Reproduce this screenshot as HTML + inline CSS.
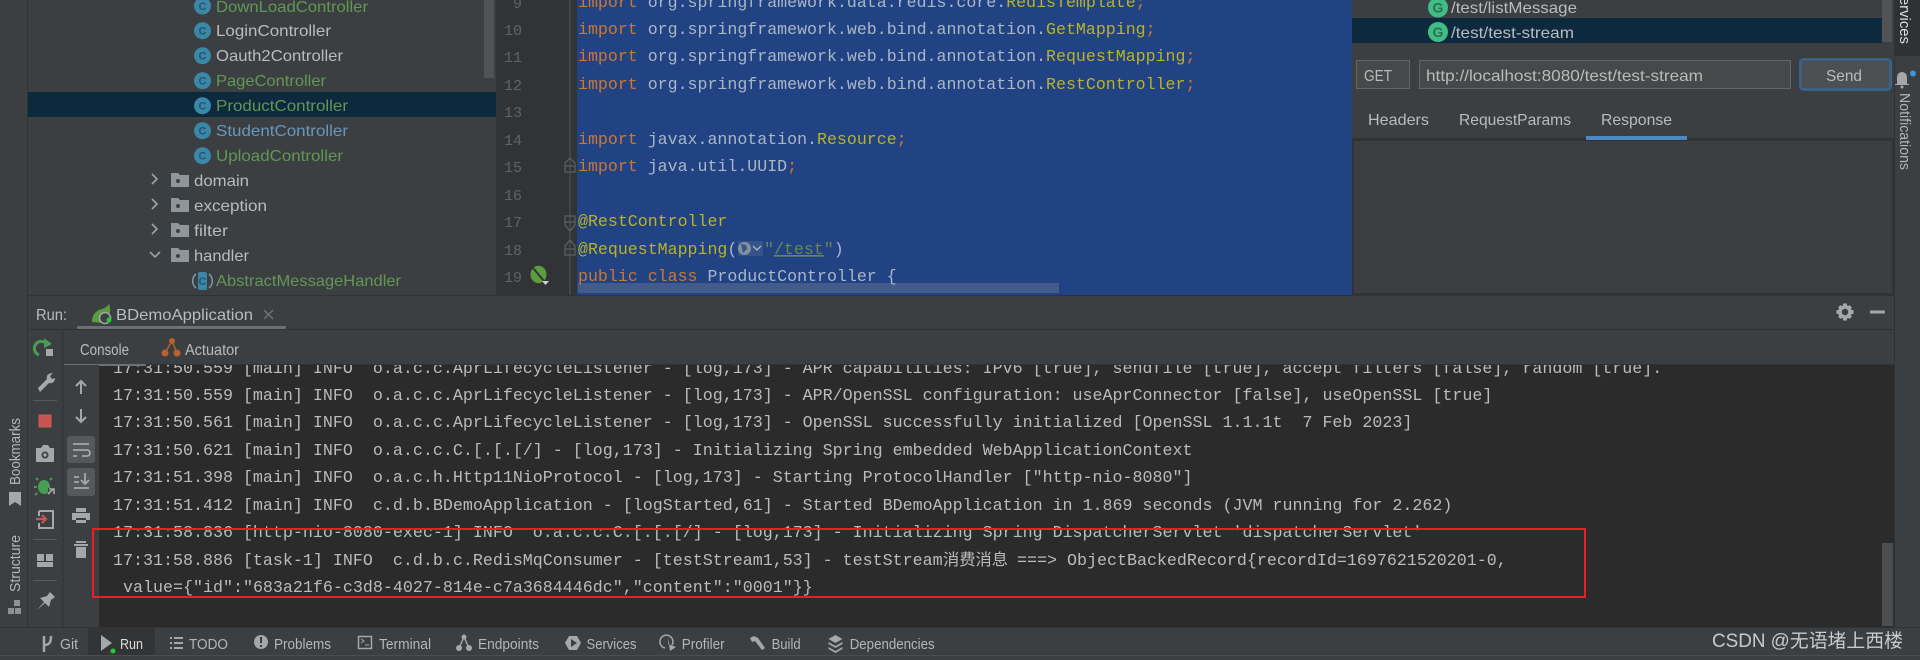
<!DOCTYPE html>
<html lang="en"><head><meta charset="utf-8"><title>IDE Run Console</title>
<style>
html,body{margin:0;padding:0;background:#3c3f41;width:1920px;height:660px;overflow:hidden}
svg{display:block}
text{white-space:pre}
.u{font-family:"Liberation Sans","Noto Sans CJK SC",sans-serif;font-size:16px;fill:#bbbbbb}
.s{font-family:"Liberation Sans","Noto Sans CJK SC",sans-serif;font-size:14.5px;fill:#b4b6b8}
.m{font-family:"Liberation Mono","Noto Sans CJK SC",monospace;font-size:16.6px;fill:#a9b7c6}
.c{font-family:"Liberation Mono","Noto Sans CJK SC",monospace;font-size:16.67px;fill:#bbbbbb}
.n{font-family:"Liberation Mono",monospace;font-size:15px;fill:#606366;text-anchor:end}
.k{fill:#cc7832}.y{fill:#b8b32a}.g{fill:#629755}.b{fill:#6897bb}.str{fill:#6a8759}
.l{font-family:"Liberation Sans",sans-serif;font-size:11px;font-weight:bold;fill:#25566e;text-anchor:middle}
.i{fill:#a5a8aa}.st{fill:none;stroke:#a5a8aa;stroke-width:2}
</style></head><body>
<svg xmlns="http://www.w3.org/2000/svg" width="1920" height="660" viewBox="0 0 1920 660">
<rect width="1920" height="660" fill="#3c3f41"/>

<!-- project tree -->
<rect x="27" y="0" width="1" height="296" fill="#323232"/>
<rect x="28" y="92" width="468" height="25" fill="#0d293e"/>
<rect x="484" y="0" width="10" height="78" fill="#505254"/>
<g>
<circle cx="202.500" cy="6" r="8.500" fill="#3a87a8"/><text class="l" x="202.500" y="10">C</text>
<circle cx="202.500" cy="30.700" r="8.500" fill="#3a87a8"/><text class="l" x="202.500" y="34.700">C</text>
<circle cx="202.500" cy="55.700" r="8.500" fill="#3a87a8"/><text class="l" x="202.500" y="59.700">C</text>
<circle cx="202.500" cy="80.700" r="8.500" fill="#3a87a8"/><text class="l" x="202.500" y="84.700">C</text>
<circle cx="202.500" cy="105.700" r="8.500" fill="#3a87a8"/><text class="l" x="202.500" y="109.700">C</text>
<circle cx="202.500" cy="130.700" r="8.500" fill="#3a87a8"/><text class="l" x="202.500" y="134.700">C</text>
<circle cx="202.500" cy="155.700" r="8.500" fill="#3a87a8"/><text class="l" x="202.500" y="159.700">C</text>
<path d="M196 274a9 9 0 0 0 0 14M209 274a9 9 0 0 1 0 14" fill="none" stroke="#7f9aa8" stroke-width="1.500"/>
<rect x="198" y="272" width="9" height="18" rx="2" fill="#3a87a8"/><text class="l" x="202.500" y="285">C</text>
</g>
<text class="u g" x="216" y="12" textLength="152" lengthAdjust="spacingAndGlyphs">DownLoadController</text>
<text class="u" x="216" y="36" textLength="115" lengthAdjust="spacingAndGlyphs">LoginController</text>
<text class="u" x="216" y="61" textLength="127" lengthAdjust="spacingAndGlyphs">Oauth2Controller</text>
<text class="u g" x="216" y="86" textLength="110" lengthAdjust="spacingAndGlyphs">PageController</text>
<text class="u g" x="216" y="111" textLength="132" lengthAdjust="spacingAndGlyphs">ProductController</text>
<text class="u b" x="216" y="136" textLength="132" lengthAdjust="spacingAndGlyphs">StudentController</text>
<text class="u g" x="216" y="161" textLength="127" lengthAdjust="spacingAndGlyphs">UploadController</text>
<text class="u" x="194" y="186" textLength="55" lengthAdjust="spacingAndGlyphs">domain</text>
<text class="u" x="194" y="211" textLength="73" lengthAdjust="spacingAndGlyphs">exception</text>
<text class="u" x="194" y="236" textLength="34" lengthAdjust="spacingAndGlyphs">filter</text>
<text class="u" x="194" y="261" textLength="55" lengthAdjust="spacingAndGlyphs">handler</text>
<text class="u g" x="216" y="286" textLength="185" lengthAdjust="spacingAndGlyphs">AbstractMessageHandler</text>
<g fill="#90979c">
<path d="M171 173h7l2 2h9v12h-18z"/><path d="M171 198h7l2 2h9v12h-18z"/><path d="M171 223h7l2 2h9v12h-18z"/><path d="M171 248h7l2 2h9v12h-18z"/>
</g>
<g fill="#3c3f41"><circle cx="178" cy="181" r="2"/><circle cx="178" cy="206" r="2"/><circle cx="178" cy="231" r="2"/><circle cx="178" cy="256" r="2"/></g>
<g fill="none" stroke="#a0a3a5" stroke-width="1.600">
<path d="M152 174l5 5-5 5M152 199l5 5-5 5M152 224l5 5-5 5M150 252l5 5 5-5"/>
</g>

<!-- gutter -->
<rect x="496" y="0" width="81" height="295" fill="#313335"/>
<rect x="569.500" y="0" width="1" height="295" fill="#555555"/>
<text class="n" x="522" y="8">9</text>
<text class="n" x="522" y="35">10</text>
<text class="n" x="522" y="62">11</text>
<text class="n" x="522" y="90">12</text>
<text class="n" x="522" y="117">13</text>
<text class="n" x="522" y="145">14</text>
<text class="n" x="522" y="172">15</text>
<text class="n" x="522" y="200">16</text>
<text class="n" x="522" y="227">17</text>
<text class="n" x="522" y="255">18</text>
<text class="n" x="522" y="282">19</text>
<g fill="none" stroke="#5c5e60" stroke-width="1.300">
<path d="M565 172v-9l5-5 5 5v9zM565 166h10"/>
<path d="M565 216v9l5 6 5-6v-9zM565 222h10"/>
<path d="M565 255v-9l5-6 5 6v9zM565 249h10"/>
</g>
<ellipse cx="538.500" cy="274.500" rx="8" ry="8.700" fill="#5a9c3f"/>
<path d="M533 268l11 13" stroke="#2f3133" stroke-width="1.800"/>
<path d="M542 281h7l-3.500 4z" fill="#cfd1d3"/>

<!-- code -->
<rect x="577" y="0" width="775" height="295" fill="#214283"/>
<rect x="578" y="283" width="481" height="10" fill="#425b8b"/>
<rect x="738" y="241" width="25" height="15" rx="2" fill="#35558a"/>
<circle cx="744.500" cy="248.500" r="6.500" fill="#84909f"/><path d="M741 244l5 1 1 4-4 4z" fill="#35558a"/>
<path d="M753 246l4 4 4-4" fill="none" stroke="#a9b7c6" stroke-width="1.300"/>
<g class="m">
<text class="m" x="578" y="7"><tspan class="k">import</tspan> org.springframework.data.redis.core.<tspan class="y">RedisTemplate</tspan><tspan class="k">;</tspan></text>
<text class="m" x="578" y="34"><tspan class="k">import</tspan> org.springframework.web.bind.annotation.<tspan class="y">GetMapping</tspan><tspan class="k">;</tspan></text>
<text class="m" x="578" y="61"><tspan class="k">import</tspan> org.springframework.web.bind.annotation.<tspan class="y">RequestMapping</tspan><tspan class="k">;</tspan></text>
<text class="m" x="578" y="89"><tspan class="k">import</tspan> org.springframework.web.bind.annotation.<tspan class="y">RestController</tspan><tspan class="k">;</tspan></text>
<text class="m" x="578" y="144"><tspan class="k">import</tspan> javax.annotation.<tspan class="y">Resource</tspan><tspan class="k">;</tspan></text>
<text class="m" x="578" y="171"><tspan class="k">import</tspan> java.util.UUID<tspan class="k">;</tspan></text>
<text class="m y" x="578" y="226">@RestController</text>
<text class="m" x="578" y="254"><tspan class="y">@RequestMapping</tspan>(</text>
<text class="m" x="764" y="254"><tspan class="str">"</tspan><tspan class="str" text-decoration="underline">/test</tspan><tspan class="str">"</tspan>)</text>
<text class="m" x="578" y="281"><tspan class="k">public class</tspan> ProductController {</text>
</g>

<!-- right tool panel -->
<rect x="1352" y="0" width="542" height="296" fill="#3c3f41"/>
<rect x="1352" y="18" width="530" height="25" fill="#0d293e"/>
<rect x="1882" y="0" width="10" height="42" fill="#505254"/>
<circle cx="1438" cy="7.500" r="10" fill="#3fbd85"/><text class="l" style="font-size:14px;fill:#2e6f53" x="1438" y="12.500">G</text>
<circle cx="1438" cy="32" r="10" fill="#3fbd85"/><text class="l" style="font-size:14px;fill:#2e6f53" x="1438" y="37">G</text>
<text class="u" x="1451" y="13" textLength="126" lengthAdjust="spacingAndGlyphs">/test/listMessage</text>
<text class="u" x="1451" y="38" textLength="123" lengthAdjust="spacingAndGlyphs">/test/test-stream</text>
<rect x="1356.500" y="60.500" width="53" height="28" fill="#45494a" stroke="#646464"/>
<text class="u" x="1364" y="81" textLength="28" lengthAdjust="spacingAndGlyphs">GET</text>
<rect x="1419.500" y="60.500" width="371" height="28" fill="#45494a" stroke="#646464"/>
<text class="u" x="1426" y="81" textLength="277" lengthAdjust="spacingAndGlyphs">http://localhost:8080/test/test-stream</text>
<rect x="1800.500" y="59.500" width="90" height="30" rx="3" fill="#4c5052" stroke="#3d6185" stroke-width="3"/>
<text class="u" x="1826" y="81" textLength="36" lengthAdjust="spacingAndGlyphs">Send</text>
<text class="u" x="1368" y="125" textLength="61" lengthAdjust="spacingAndGlyphs">Headers</text>
<text class="u" x="1459" y="125" textLength="112" lengthAdjust="spacingAndGlyphs">RequestParams</text>
<text class="u" x="1601" y="125" textLength="71" lengthAdjust="spacingAndGlyphs">Response</text>
<rect x="1352" y="138" width="542" height="3" fill="#323232"/>
<rect x="1586" y="136" width="101" height="4" fill="#4a88c7"/>
<rect x="1352" y="141" width="2" height="155" fill="#323232"/>
<rect x="1892" y="141" width="2" height="155" fill="#323232"/>
<rect x="1352" y="293" width="542" height="3" fill="#323232"/>

<!-- console -->
<rect x="99" y="365" width="1796" height="262" fill="#2b2b2b"/>
<rect x="1882" y="543" width="11" height="83" fill="#4d4e50"/>
<text class="c" x="113" y="373">17:31:50.559 [main] INFO  o.a.c.c.AprLifecycleListener - [log,173] - APR capabilities: IPv6 [true], sendfile [true], accept filters [false], random [true].</text>
<text class="c" x="113" y="400">17:31:50.559 [main] INFO  o.a.c.c.AprLifecycleListener - [log,173] - APR/OpenSSL configuration: useAprConnector [false], useOpenSSL [true]</text>
<text class="c" x="113" y="427">17:31:50.561 [main] INFO  o.a.c.c.AprLifecycleListener - [log,173] - OpenSSL successfully initialized [OpenSSL 1.1.1t  7 Feb 2023]</text>
<text class="c" x="113" y="455">17:31:50.621 [main] INFO  o.a.c.c.C.[.[.[/] - [log,173] - Initializing Spring embedded WebApplicationContext</text>
<text class="c" x="113" y="482">17:31:51.398 [main] INFO  o.a.c.h.Http11NioProtocol - [log,173] - Starting ProtocolHandler ["http-nio-8080"]</text>
<text class="c" x="113" y="510">17:31:51.412 [main] INFO  c.d.b.BDemoApplication - [logStarted,61] - Started BDemoApplication in 1.869 seconds (JVM running for 2.262)</text>
<text class="c" x="113" y="537">17:31:58.836 [http-nio-8080-exec-1] INFO  o.a.c.c.C.[.[.[/] - [log,173] - Initializing Spring DispatcherServlet 'dispatcherServlet'</text>
<text class="c" x="113" y="565">17:31:58.886 [task-1] INFO  c.d.b.c.RedisMqConsumer - [testStream1,53] - testStream</text>
<text class="c" x="943" y="565" style="font-size:16px" textLength="65" lengthAdjust="spacingAndGlyphs">消费消息</text>
<text class="c" x="1017" y="565">===&gt; ObjectBackedRecord{recordId=1697621520201-0,</text>
<text class="c" x="123" y="592">value={"id":"683a21f6-c3d8-4027-814e-c7a3684446dc","content":"0001"}}</text>

<!-- run header -->
<rect x="28" y="295" width="1867" height="70" fill="#3c3f41"/>
<rect x="28" y="295" width="1867" height="1" fill="#323232"/>
<rect x="28" y="329" width="1867" height="1" fill="#323232"/>
<rect x="99" y="364" width="1796" height="1" fill="#323232"/>
<text class="u" x="36" y="320" textLength="31" lengthAdjust="spacingAndGlyphs">Run:</text>
<path d="M92 322c0-8 5-12 10-13 3-1 6-3 7-5 2 5 1 11-1 14l-6 5z" fill="#5a9c3f"/>
<circle cx="105" cy="318" r="5.500" fill="#3c3f41" stroke="#a5a8aa" stroke-width="1.500"/>
<circle cx="109" cy="320" r="2.500" fill="#1fd12f"/>
<text class="u" x="116" y="320" textLength="137" lengthAdjust="spacingAndGlyphs">BDemoApplication</text>
<path d="M264 310l9 9M273 310l-9 9" stroke="#6e7173" stroke-width="1.500"/>
<rect x="77" y="326" width="209" height="3" rx="1.500" fill="#6e7173"/>
<text class="u" x="80" y="355" textLength="49" lengthAdjust="spacingAndGlyphs">Console</text>
<rect x="64" y="364" width="82" height="2" fill="#6e7173"/>
<g fill="#b5622e"><circle cx="172" cy="341" r="3"/><circle cx="165" cy="353" r="3.500"/><circle cx="177" cy="353" r="3.500"/></g>
<path d="M172 341l-7 12M172 341l5 12" stroke="#b5622e" stroke-width="1.500"/>
<text class="u" x="185" y="355" textLength="54" lengthAdjust="spacingAndGlyphs">Actuator</text>
<g transform="translate(1845 312)">
<circle r="5" fill="none" stroke="#a5a8aa" stroke-width="3.500"/>
<path d="M-2-8.500h4v3h-4zM-2 5.500h4v3h-4zM-8.500-2h3v4h-3zM5.500-2h3v4h-3zM-7-4.500l2.500-2.500 2.500 2.500-2.500 2.500zM4.500-7l2.500 2.500-2.500 2.500-2.500-2.500zM-7 4.500l2.500-2.500 2.500 2.500-2.500 2.500zM4.500 7l-2.500-2.500 2.500-2.500 2.500 2.500z" fill="#a5a8aa"/>
</g>
<rect x="1870" y="310.500" width="15" height="3" fill="#a5a8aa"/>

<!-- tool columns -->
<rect x="28" y="365" width="71" height="262" fill="#3c3f41"/>
<rect x="27" y="296" width="1" height="331" fill="#323232"/>
<rect x="62.500" y="330" width="1" height="297" fill="#323232"/>
<path d="M39 355a7 7 0 1 1 9-9" fill="none" stroke="#499c54" stroke-width="3"/>
<path d="M44 338l8 6-8 4z" fill="#499c54"/>
<rect x="46" y="349" width="7" height="7" fill="#a5a8aa"/>
<path d="M38 388l9-9c-1-3 1-6 6-6l-3 3 2 3 3-1c0 4-3 6-6 5l-9 9z" fill="#a5a8aa"/>
<rect x="33" y="400" width="24" height="1" fill="#56585a"/>
<rect x="39" y="415" width="12" height="12" fill="#c75450" stroke="#d05a55"/>
<path d="M36 448h5l2-3h5l2 3h4v14h-18z" fill="#a5a8aa"/><circle cx="45" cy="455" r="3.500" fill="#3c3f41"/><circle cx="45" cy="455" r="1.700" fill="#a5a8aa"/>
<ellipse cx="44" cy="487" rx="6" ry="7" fill="#499c54"/>
<path d="M38 480l-2-2M50 480l2-2M37 487h-3M37 493l-2 2" stroke="#499c54" stroke-width="2"/>
<path d="M48 488h7v7h-7z" fill="#3c3f41"/><path d="M48 494l5-5M49 489h5v5" fill="none" stroke="#a5a8aa" stroke-width="1.600"/>
<path d="M39 511h14v17h-14v-5M39 516v-5" fill="none" stroke="#a5a8aa" stroke-width="2"/>
<path d="M36 519h10M42 515l4 4-4 4" fill="none" stroke="#c75450" stroke-width="2.200"/>
<rect x="33" y="539" width="24" height="1" fill="#56585a"/>
<path d="M37 554h7v7h-7zM46 554h7v7h-7zM37 562h16v5h-16z" fill="#a5a8aa"/>
<rect x="33" y="580" width="24" height="1" fill="#56585a"/>
<path d="M37 610l7-8-4-4 7-2 3-4 5 5-4 3-2 7-4-4z" fill="#a5a8aa"/>

<path d="M81 394v-12M76 386l5-5 5 5" fill="none" stroke="#a5a8aa" stroke-width="2"/>
<path d="M81 409v12M76 417l5 5 5-5" fill="none" stroke="#a5a8aa" stroke-width="2"/>
<rect x="67" y="436" width="28" height="27" rx="3" fill="#56595b"/>
<path d="M73 444h16M73 450h14a3 3 0 0 1 0 6h-5M73 456h4" fill="none" stroke="#a5a8aa" stroke-width="1.800"/>
<rect x="67" y="468" width="28" height="28" rx="3" fill="#56595b"/>
<path d="M74 477h5M74 482h5M74 488h15M85 473v10M81 480l4 4 4-4" fill="none" stroke="#a5a8aa" stroke-width="1.800"/>
<path d="M76 508h10v4h-10zM72 513h18v7h-4v-2h-10v2h-4zM76 520h10v3h-10z" fill="#a5a8aa"/>
<path d="M76 541h10v2h-10zM74 544h14v2h-14zM76 547h10v11h-10z" fill="#a5a8aa"/>

<!-- highlight box -->
<rect x="93" y="529" width="1492" height="68" fill="none" stroke="#ee1c25" stroke-width="2"/>

<!-- left strip -->
<text class="s" transform="translate(20 485) rotate(-90)" textLength="67" lengthAdjust="spacingAndGlyphs">Bookmarks</text>
<path d="M9 492h12v14l-6-4-6 4z" fill="#a5a8aa"/>
<text class="s" transform="translate(20 592) rotate(-90)" textLength="57" lengthAdjust="spacingAndGlyphs">Structure</text>
<path d="M14 600h6v6h-6zM8 608h6v6h-6zM15 608h6v6h-6z" fill="#8e9193"/>

<!-- right strip -->
<rect x="1894" y="0" width="26" height="660" fill="#3c3f41"/>
<rect x="1894" y="0" width="1" height="627" fill="#323232"/>
<rect x="1895" y="0" width="25" height="56" fill="#2f3133"/>
<text class="s" style="fill:#dcdcdc" transform="translate(1900 -13) rotate(90)" textLength="57" lengthAdjust="spacingAndGlyphs">Services</text>
<path d="M1902 72a5 5 0 0 1 5 5v7h2v1h-14v-1h2v-7a5 5 0 0 1 5-5z" fill="#a5a8aa"/>
<circle cx="1902" cy="87" r="1.500" fill="#a5a8aa"/>
<circle cx="1913" cy="73.500" r="3" fill="#3f95d6"/>
<text class="s" transform="translate(1900 93) rotate(90)" textLength="77" lengthAdjust="spacingAndGlyphs">Notifications</text>

<!-- bottom bar -->
<rect x="0" y="627" width="1920" height="33" fill="#3c3f41"/>
<rect x="0" y="627" width="1920" height="1" fill="#323232"/>
<rect x="0" y="655" width="1920" height="1" fill="#4a4d4f"/>
<rect x="88" y="628" width="67" height="27" fill="#323436"/>
<path d="M44 636v16M44 645c5 0 7-2 7-9" fill="none" stroke="#a5a8aa" stroke-width="2.500"/>
<text class="s" x="60" y="649" textLength="18" lengthAdjust="spacingAndGlyphs">Git</text>
<path d="M101 635l11 8-11 8z" fill="#a5a8aa"/><circle cx="113" cy="651" r="2.500" fill="#1fd12f"/>
<text class="s" style="fill:#dcdcdc" x="120" y="649" textLength="23" lengthAdjust="spacingAndGlyphs">Run</text>
<path d="M170 637h2v2h-2zM174 637h9v2h-9zM170 642h2v2h-2zM174 642h9v2h-9zM170 647h2v2h-2zM174 647h9v2h-9z" fill="#a5a8aa"/>
<text class="s" x="189" y="649" textLength="39" lengthAdjust="spacingAndGlyphs">TODO</text>
<circle cx="261" cy="642" r="7" fill="#a5a8aa"/><path d="M260 637h2v6h-2zM260 645h2v2h-2z" fill="#3c3f41"/>
<text class="s" x="274" y="649" textLength="57" lengthAdjust="spacingAndGlyphs">Problems</text>
<rect x="358.500" y="636.500" width="13" height="12" fill="#3c3f41" stroke="#a5a8aa" stroke-width="1.500"/><path d="M361 639l3 2-3 2M365 645h4" fill="none" stroke="#a5a8aa"/>
<text class="s" x="379" y="649" textLength="52" lengthAdjust="spacingAndGlyphs">Terminal</text>
<g fill="#a5a8aa"><circle cx="464" cy="637" r="2.500"/><circle cx="459" cy="648" r="3"/><circle cx="469" cy="648" r="3"/></g><path d="M464 637l-5 11M464 637l5 11" stroke="#a5a8aa" stroke-width="1.500"/>
<text class="s" x="478" y="649" textLength="61" lengthAdjust="spacingAndGlyphs">Endpoints</text>
<path d="M569 636h8l4 7-4 7h-8l-4-7z" fill="#a5a8aa"/><path d="M571 639l6 4-6 4z" fill="#3c3f41"/>
<text class="s" x="586.500" y="649" textLength="50" lengthAdjust="spacingAndGlyphs">Services</text>
<path d="M672 645a6.500 6.500 0 1 0-7 3" fill="none" stroke="#a5a8aa" stroke-width="1.500"/><path d="M668 638v6l8 3-6 4z" fill="#a5a8aa"/>
<text class="s" x="681.700" y="649" textLength="43" lengthAdjust="spacingAndGlyphs">Profiler</text>
<path d="M750 638l4-2 4 2 7 10-3 2-7-9-3 1z" fill="#a5a8aa"/>
<text class="s" x="771.600" y="649" textLength="29" lengthAdjust="spacingAndGlyphs">Build</text>
<path d="M835.500 635l7 4-7 4-7-4zM828.500 642l7 4 7-4v2l-7 4-7-4zM828.500 647l7 4 7-4v2l-7 4-7-4z" fill="#a5a8aa"/>
<text class="s" x="849.700" y="649" textLength="85" lengthAdjust="spacingAndGlyphs">Dependencies</text>
<text class="u" style="font-size:19px;fill:#c8cacc" x="1712" y="647" textLength="191" lengthAdjust="spacingAndGlyphs">CSDN @无语堵上西楼</text>
</svg>
</body></html>
